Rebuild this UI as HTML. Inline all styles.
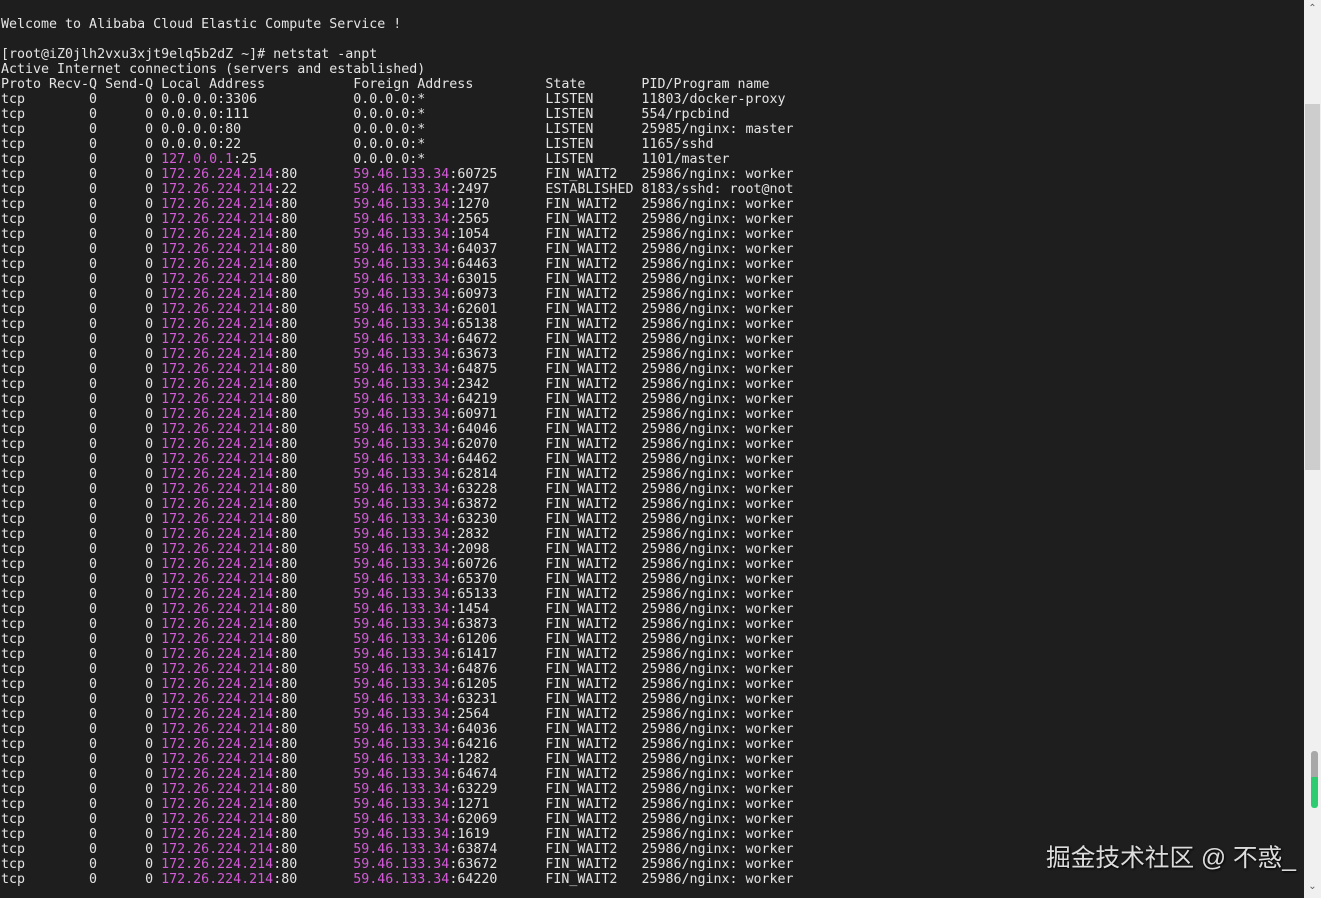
<!DOCTYPE html>
<html><head><meta charset="utf-8"><style>
html,body{margin:0;padding:0;width:1321px;height:898px;overflow:hidden;background:#1e1e1e}
pre{margin:0;position:absolute;left:1px;top:2px;font-family:"DejaVu Sans Mono","Liberation Mono",monospace;font-size:13.3px;line-height:15px;color:#e4e4e4;white-space:pre}
m{color:#d45ad8}
#sb{position:absolute;left:1304px;top:0;width:17px;height:898px;background:#f0f0f0}
#th{position:absolute;left:1305px;top:104px;width:15px;height:366px;background:#cdcdcd}
#g1{position:absolute;left:1311px;top:751px;width:7px;height:27px;background:#a8a8a8;border-radius:3px 3px 0 0}
#g2{position:absolute;left:1311px;top:777px;width:7px;height:31px;background:#2ecc71;border-radius:0 0 3px 3px}
.ar{position:absolute;left:1304px;width:17px;text-align:center;font:10px "DejaVu Sans",sans-serif;color:#606060}
#wm{position:absolute;left:1046px;top:838px;font-family:"Liberation Sans","Noto Sans CJK SC",sans-serif;font-size:24.7px;color:#dcdcdc;text-shadow:1px 1px 2px #000;white-space:nowrap}
</style></head><body>
<pre>

Welcome to Alibaba Cloud Elastic Compute Service !

[root@iZ0jlh2vxu3xjt9elq5b2dZ ~]# netstat -anpt
Active Internet connections (servers and established)
Proto Recv-Q Send-Q Local Address           Foreign Address         State       PID/Program name
tcp        0      0 0.0.0.0:3306            0.0.0.0:*               LISTEN      11803/docker-proxy
tcp        0      0 0.0.0.0:111             0.0.0.0:*               LISTEN      554/rpcbind
tcp        0      0 0.0.0.0:80              0.0.0.0:*               LISTEN      25985/nginx: master
tcp        0      0 0.0.0.0:22              0.0.0.0:*               LISTEN      1165/sshd
tcp        0      0 <m>127.0.0.1</m>:25            0.0.0.0:*               LISTEN      1101/master
tcp        0      0 <m>172.26.224.214</m>:80       <m>59.46.133.34</m>:60725      FIN_WAIT2   25986/nginx: worker
tcp        0      0 <m>172.26.224.214</m>:22       <m>59.46.133.34</m>:2497       ESTABLISHED 8183/sshd: root@not
tcp        0      0 <m>172.26.224.214</m>:80       <m>59.46.133.34</m>:1270       FIN_WAIT2   25986/nginx: worker
tcp        0      0 <m>172.26.224.214</m>:80       <m>59.46.133.34</m>:2565       FIN_WAIT2   25986/nginx: worker
tcp        0      0 <m>172.26.224.214</m>:80       <m>59.46.133.34</m>:1054       FIN_WAIT2   25986/nginx: worker
tcp        0      0 <m>172.26.224.214</m>:80       <m>59.46.133.34</m>:64037      FIN_WAIT2   25986/nginx: worker
tcp        0      0 <m>172.26.224.214</m>:80       <m>59.46.133.34</m>:64463      FIN_WAIT2   25986/nginx: worker
tcp        0      0 <m>172.26.224.214</m>:80       <m>59.46.133.34</m>:63015      FIN_WAIT2   25986/nginx: worker
tcp        0      0 <m>172.26.224.214</m>:80       <m>59.46.133.34</m>:60973      FIN_WAIT2   25986/nginx: worker
tcp        0      0 <m>172.26.224.214</m>:80       <m>59.46.133.34</m>:62601      FIN_WAIT2   25986/nginx: worker
tcp        0      0 <m>172.26.224.214</m>:80       <m>59.46.133.34</m>:65138      FIN_WAIT2   25986/nginx: worker
tcp        0      0 <m>172.26.224.214</m>:80       <m>59.46.133.34</m>:64672      FIN_WAIT2   25986/nginx: worker
tcp        0      0 <m>172.26.224.214</m>:80       <m>59.46.133.34</m>:63673      FIN_WAIT2   25986/nginx: worker
tcp        0      0 <m>172.26.224.214</m>:80       <m>59.46.133.34</m>:64875      FIN_WAIT2   25986/nginx: worker
tcp        0      0 <m>172.26.224.214</m>:80       <m>59.46.133.34</m>:2342       FIN_WAIT2   25986/nginx: worker
tcp        0      0 <m>172.26.224.214</m>:80       <m>59.46.133.34</m>:64219      FIN_WAIT2   25986/nginx: worker
tcp        0      0 <m>172.26.224.214</m>:80       <m>59.46.133.34</m>:60971      FIN_WAIT2   25986/nginx: worker
tcp        0      0 <m>172.26.224.214</m>:80       <m>59.46.133.34</m>:64046      FIN_WAIT2   25986/nginx: worker
tcp        0      0 <m>172.26.224.214</m>:80       <m>59.46.133.34</m>:62070      FIN_WAIT2   25986/nginx: worker
tcp        0      0 <m>172.26.224.214</m>:80       <m>59.46.133.34</m>:64462      FIN_WAIT2   25986/nginx: worker
tcp        0      0 <m>172.26.224.214</m>:80       <m>59.46.133.34</m>:62814      FIN_WAIT2   25986/nginx: worker
tcp        0      0 <m>172.26.224.214</m>:80       <m>59.46.133.34</m>:63228      FIN_WAIT2   25986/nginx: worker
tcp        0      0 <m>172.26.224.214</m>:80       <m>59.46.133.34</m>:63872      FIN_WAIT2   25986/nginx: worker
tcp        0      0 <m>172.26.224.214</m>:80       <m>59.46.133.34</m>:63230      FIN_WAIT2   25986/nginx: worker
tcp        0      0 <m>172.26.224.214</m>:80       <m>59.46.133.34</m>:2832       FIN_WAIT2   25986/nginx: worker
tcp        0      0 <m>172.26.224.214</m>:80       <m>59.46.133.34</m>:2098       FIN_WAIT2   25986/nginx: worker
tcp        0      0 <m>172.26.224.214</m>:80       <m>59.46.133.34</m>:60726      FIN_WAIT2   25986/nginx: worker
tcp        0      0 <m>172.26.224.214</m>:80       <m>59.46.133.34</m>:65370      FIN_WAIT2   25986/nginx: worker
tcp        0      0 <m>172.26.224.214</m>:80       <m>59.46.133.34</m>:65133      FIN_WAIT2   25986/nginx: worker
tcp        0      0 <m>172.26.224.214</m>:80       <m>59.46.133.34</m>:1454       FIN_WAIT2   25986/nginx: worker
tcp        0      0 <m>172.26.224.214</m>:80       <m>59.46.133.34</m>:63873      FIN_WAIT2   25986/nginx: worker
tcp        0      0 <m>172.26.224.214</m>:80       <m>59.46.133.34</m>:61206      FIN_WAIT2   25986/nginx: worker
tcp        0      0 <m>172.26.224.214</m>:80       <m>59.46.133.34</m>:61417      FIN_WAIT2   25986/nginx: worker
tcp        0      0 <m>172.26.224.214</m>:80       <m>59.46.133.34</m>:64876      FIN_WAIT2   25986/nginx: worker
tcp        0      0 <m>172.26.224.214</m>:80       <m>59.46.133.34</m>:61205      FIN_WAIT2   25986/nginx: worker
tcp        0      0 <m>172.26.224.214</m>:80       <m>59.46.133.34</m>:63231      FIN_WAIT2   25986/nginx: worker
tcp        0      0 <m>172.26.224.214</m>:80       <m>59.46.133.34</m>:2564       FIN_WAIT2   25986/nginx: worker
tcp        0      0 <m>172.26.224.214</m>:80       <m>59.46.133.34</m>:64036      FIN_WAIT2   25986/nginx: worker
tcp        0      0 <m>172.26.224.214</m>:80       <m>59.46.133.34</m>:64216      FIN_WAIT2   25986/nginx: worker
tcp        0      0 <m>172.26.224.214</m>:80       <m>59.46.133.34</m>:1282       FIN_WAIT2   25986/nginx: worker
tcp        0      0 <m>172.26.224.214</m>:80       <m>59.46.133.34</m>:64674      FIN_WAIT2   25986/nginx: worker
tcp        0      0 <m>172.26.224.214</m>:80       <m>59.46.133.34</m>:63229      FIN_WAIT2   25986/nginx: worker
tcp        0      0 <m>172.26.224.214</m>:80       <m>59.46.133.34</m>:1271       FIN_WAIT2   25986/nginx: worker
tcp        0      0 <m>172.26.224.214</m>:80       <m>59.46.133.34</m>:62069      FIN_WAIT2   25986/nginx: worker
tcp        0      0 <m>172.26.224.214</m>:80       <m>59.46.133.34</m>:1619       FIN_WAIT2   25986/nginx: worker
tcp        0      0 <m>172.26.224.214</m>:80       <m>59.46.133.34</m>:63874      FIN_WAIT2   25986/nginx: worker
tcp        0      0 <m>172.26.224.214</m>:80       <m>59.46.133.34</m>:63672      FIN_WAIT2   25986/nginx: worker
tcp        0      0 <m>172.26.224.214</m>:80       <m>59.46.133.34</m>:64220      FIN_WAIT2   25986/nginx: worker
</pre>
<div id="sb"></div><div id="th"></div><div id="g1"></div><div id="g2"></div>
<div class="ar" style="top:3px">&#8963;</div>
<div class="ar" style="top:881px">&#8964;</div>
<div id="wm">掘金技术社区 @ 不惑_</div>
</body></html>
